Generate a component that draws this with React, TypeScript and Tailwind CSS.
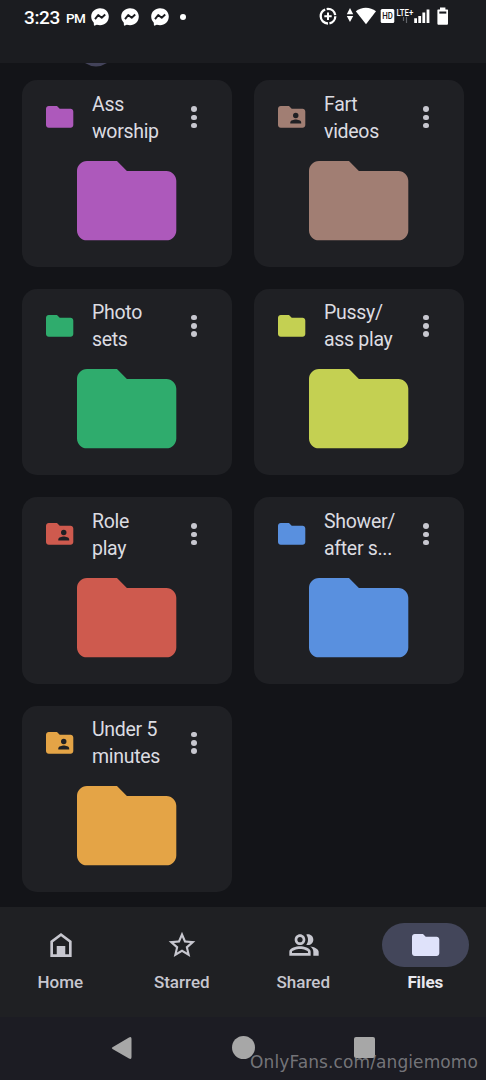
import React from 'react';

interface Folder {
  id: number;
  lines: [string, string];
  color: string;
  shared?: boolean;
}

const folders: Folder[] = [
  { id: 1, lines: ['Ass', 'worship'], color: '#ad59bb' },
  { id: 2, lines: ['Fart', 'videos'], color: '#a17e73', shared: true },
  { id: 3, lines: ['Photo', 'sets'], color: '#2fac6d' },
  { id: 4, lines: ['Pussy/', 'ass play'], color: '#c4d052' },
  { id: 5, lines: ['Role', 'play'], color: '#ce5a4e', shared: true },
  { id: 6, lines: ['Shower/', 'after s...'], color: '#5990df' },
  { id: 7, lines: ['Under 5', 'minutes'], color: '#e4a446', shared: true },
];

const FOLDER_PATH = 'M8.05 0H2C.9 0 0 .9 0 2v12c0 1.1.9 2 2 2h16c1.1 0 2-.9 2-2V4c0-1.1-.9-2-2-2h-7.95z';

const FolderShape: React.FC<{ className: string; color: string; shared?: boolean }> = ({
  className,
  color,
  shared,
}) => (
  <svg className={`overflow-visible ${className}`} viewBox="0 0 20 16" preserveAspectRatio="none">
    <path d={FOLDER_PATH} fill={color} />
    {shared && (
      <g fill="#1f2024">
        <circle cx="13" cy="7" r="2" />
        <path d="M9 13v-.9c0-1.4 2.6-2.1 4-2.1s4 .7 4 2.1v.9z" />
      </g>
    )}
  </svg>
);

const MessengerIcon = () => (
  <svg className="h-[18px] w-[18px]" viewBox="0 0 18 18">
    <path
      d="M9 .3C4 .3.2 3.9.2 8.6c0 2.4 1 4.6 2.6 6.1l.1 2.2c0 .6.5.9 1 .7l1.9-.8c1 .3 2.1.5 3.2.5 5 0 8.8-3.7 8.8-8.7S14 .3 9 .3z"
      fill="#fff"
    />
    <path d="M4 11.1l3.2-4 3.5 2.6 3.5-3.2" fill="none" stroke="#1b1c20" strokeWidth="1.9" strokeLinejoin="round" />
  </svg>
);

const StatusBar = () => (
  <header className="flex h-[63px] shrink-0 items-start bg-[#1b1c20] text-white">
    <div className="flex h-[33px] items-center pl-6">
      <span className="mt-[2px] w-[37px] text-[19px] leading-none font-medium tracking-[-0.4px] whitespace-nowrap">3:23</span>
      <span className="mt-[5px] ml-[5px] w-[20px] text-[13.5px] leading-none font-medium tracking-[-0.5px] whitespace-nowrap">PM</span>
      <div className="ml-[5px] flex gap-[12px]">
        <MessengerIcon />
        <MessengerIcon />
        <MessengerIcon />
      </div>
      <span className="ml-[11px] h-[6px] w-[6px] rounded-full bg-white" />
    </div>
    <svg className="mt-[6px] ml-auto h-5 w-[130px] shrink-0" viewBox="318 6 130 20">
      {/* data saver */}
      <circle cx="328" cy="16.2" r="7.3" fill="none" stroke="#fff" strokeWidth="2.3" strokeDasharray="9.9 1.5 19.9 1.5 11.6 1.5" />
      <path d="M328 12.6v7.4M324.3 16.3h7.4" stroke="#fff" strokeWidth="2" />
      {/* wifi with traffic arrows */}
      <path d="M346.8 14.2l3.2-6.2 3.2 6.2zM346.8 15.9h6.4l-3.2 6.2z" fill="#fff" />
      <path d="M355.8 11.2c5.5-4.7 14.5-4.7 20.2 0L366 24.3z" fill="#fff" />
      {/* HD */}
      <rect x="380.7" y="9" width="13.6" height="14" rx="1.5" fill="#fff" />
      <text x="382.2" y="19.2" fill="#1b1c20" fontSize="8.5" fontWeight="500" textLength="10.6" lengthAdjust="spacingAndGlyphs">HD</text>
      <text x="396.5" y="16" fill="#fff" fontSize="8.5" fontWeight="500" textLength="16.8" lengthAdjust="spacingAndGlyphs">LTE+</text>
      <path d="M403.5 17v4M406.5 17v6" stroke="#62646a" strokeWidth="1.2" />
      {/* signal */}
      <path d="M415.6 23v-4.8M419.7 23v-7M423.8 23v-10.5M428 23V9.6" stroke="#fff" strokeWidth="2.8" />
      {/* battery */}
      <path d="M440 7.4h5.4v2h2c.5 0 .6.3.6.7v13.4c0 .8-.5 1.3-1.2 1.3h-8.2c-.7 0-1.2-.5-1.2-1.3V10.1c0-.4.2-.7.6-.7h2z" fill="#fff" />
      <path d="M439.3 11.5h7v2.1h-7z" fill="#1b1c20" />
    </svg>
    <div className="w-[38px] shrink-0" />
  </header>
);

const FolderCard: React.FC<{ folder: Folder }> = ({ folder }) => (
  <div className="flex h-[186.5px] flex-col items-center rounded-[15px] bg-[#1f2024]">
    <div className="flex h-[80.5px] w-full items-start pt-[10.9px] pl-6">
      <FolderShape
        className="mt-[15.6px] h-[21.7px] w-[27.3px] shrink-0"
        color={folder.color}
        shared={folder.shared}
      />
      <div className="ml-[18.7px] w-[90px] text-[19.5px] leading-[27px] tracking-[-0.3px] whitespace-nowrap text-[#dcdce1]">
        <p>{folder.lines[0]}</p>
        <p>{folder.lines[1]}</p>
      </div>
      <div className="mt-[15.6px] ml-[9.5px] flex flex-col gap-[2.8px]">
        <span className="h-[5.4px] w-[5.4px] rounded-full bg-[#c7c7cf]" />
        <span className="h-[5.4px] w-[5.4px] rounded-full bg-[#c7c7cf]" />
        <span className="h-[5.4px] w-[5.4px] rounded-full bg-[#c7c7cf]" />
      </div>
    </div>
    <FolderShape className="h-[79.3px] w-[99.3px]" color={folder.color} />
  </div>
);

const navItems = [
  {
    label: 'Home',
    icon: <path d="M12 3L4 9v12h16V9zm0 2.5l6 4.5v9h-2.8v-6.2H8.8V19H6v-9z" fillRule="evenodd" />,
  },
  {
    label: 'Starred',
    icon: (
      <path d="M22 9.24l-7.19-.62L12 2 9.19 8.63 2 9.24l5.46 4.73L5.82 21 12 17.27 18.18 21l-1.63-7.03L22 9.24zM12 15.4l-3.76 2.27 1-4.28-3.32-2.88 4.38-.38L12 6.1l1.71 4.04 4.38.38-3.32 2.88 1 4.28L12 15.4z" />
    ),
  },
  {
    label: 'Shared',
    icon: (
      <path d="M9 12c2.2 0 4-1.8 4-4s-1.8-4-4-4-4 1.8-4 4 1.8 4 4 4zm0-6c1.1 0 2 .9 2 2s-.9 2-2 2-2-.9-2-2 .9-2 2-2zm0 7c-2.7 0-8 1.34-8 4v3h16v-3c0-2.66-5.3-4-8-4zm6 5H3v-.99c.2-.72 3.3-2.01 6-2.01s5.8 1.29 6 2v1zM15 12c2.21 0 4-1.79 4-4s-1.79-4-4-4c-.47 0-.91.1-1.33.24C14.5 5.27 15 6.58 15 8s-.5 2.73-1.33 3.76c.42.14.86.24 1.33.24zM16.67 13.13C18.04 14.06 19 15.32 19 17v3h4v-3c0-2.18-3.57-3.47-6.33-3.87z" />
    ),
  },
  { label: 'Files', active: true, icon: null },
];

const BottomNav = () => (
  <nav className="grid h-[110px] shrink-0 grid-cols-4 bg-[#1f2023]">
    {navItems.map((item) => (
      <div key={item.label} className="flex flex-col items-center pt-4">
        <div
          className={`flex h-[44px] w-[87px] items-center justify-center rounded-full ${
            item.active ? 'bg-[#43465a]' : ''
          }`}
        >
          {item.active ? (
            <FolderShape className="h-[22px] w-[27.3px]" color="#dfe2fa" />
          ) : (
            <svg className="h-[32px] w-[32px] fill-[#c7c7cf]" viewBox="0 0 24 24">
              {item.icon}
            </svg>
          )}
        </div>
        <span
          className={`mt-[4px] text-[17px] leading-[22px] ${
            item.active ? 'font-bold tracking-[-0.1px] text-[#e8e8ee]' : 'pr-px font-medium text-[#c7c7cf]'
          }`}
        >
          {item.label}
        </span>
      </div>
    ))}
  </nav>
);

const SystemNav = () => (
  <footer className="relative flex h-[63px] shrink-0 items-start bg-[#1c1c23]">
    <div className="flex w-full justify-center gap-[99px] pt-[19px]">
      <svg className="h-6 w-[22px]" viewBox="0 0 22 24">
        <path d="M1.5 11.2L18 1.5Q20.5.3 20.5 2.8v18.4q0 2.5-2.5 1.3L1.5 12.9q-1.5-.9 0-1.7z" fill="#a7a7a7" />
      </svg>
      <span className="h-[23px] w-[23px] rounded-full bg-[#a7a7a7]" />
      <span className="mt-[1px] h-[21px] w-[21px] rounded-[2px] bg-[#a7a7a7]" />
    </div>
    <span className="absolute right-[8px] bottom-[7px] font-['DejaVu_Sans'] text-[17px] leading-[22px] tracking-[0.1px] whitespace-nowrap text-[#8c8c90]/80">
      OnlyFans.com/angiemomo
    </span>
  </footer>
);

export default function App() {
  return (
    <div className="flex h-[1080px] w-[486px] flex-col overflow-hidden bg-[#131418] font-[Roboto,sans-serif]">
      <StatusBar />
      <main className="relative flex-1 px-[22px] pt-[17px]">
        {/* bottom edge of the avatar scrolled under the header */}
        <svg className="absolute top-0 left-[84px] h-1 w-6" viewBox="0 0 24 4">
          <path d="M1 0h22Q12 7 1 0z" fill="#43435a" />
        </svg>
        <div className="grid grid-cols-2 gap-[22px]">
          {folders.map((folder) => (
            <FolderCard key={folder.id} folder={folder} />
          ))}
        </div>
      </main>
      <BottomNav />
      <SystemNav />
    </div>
  );
}
